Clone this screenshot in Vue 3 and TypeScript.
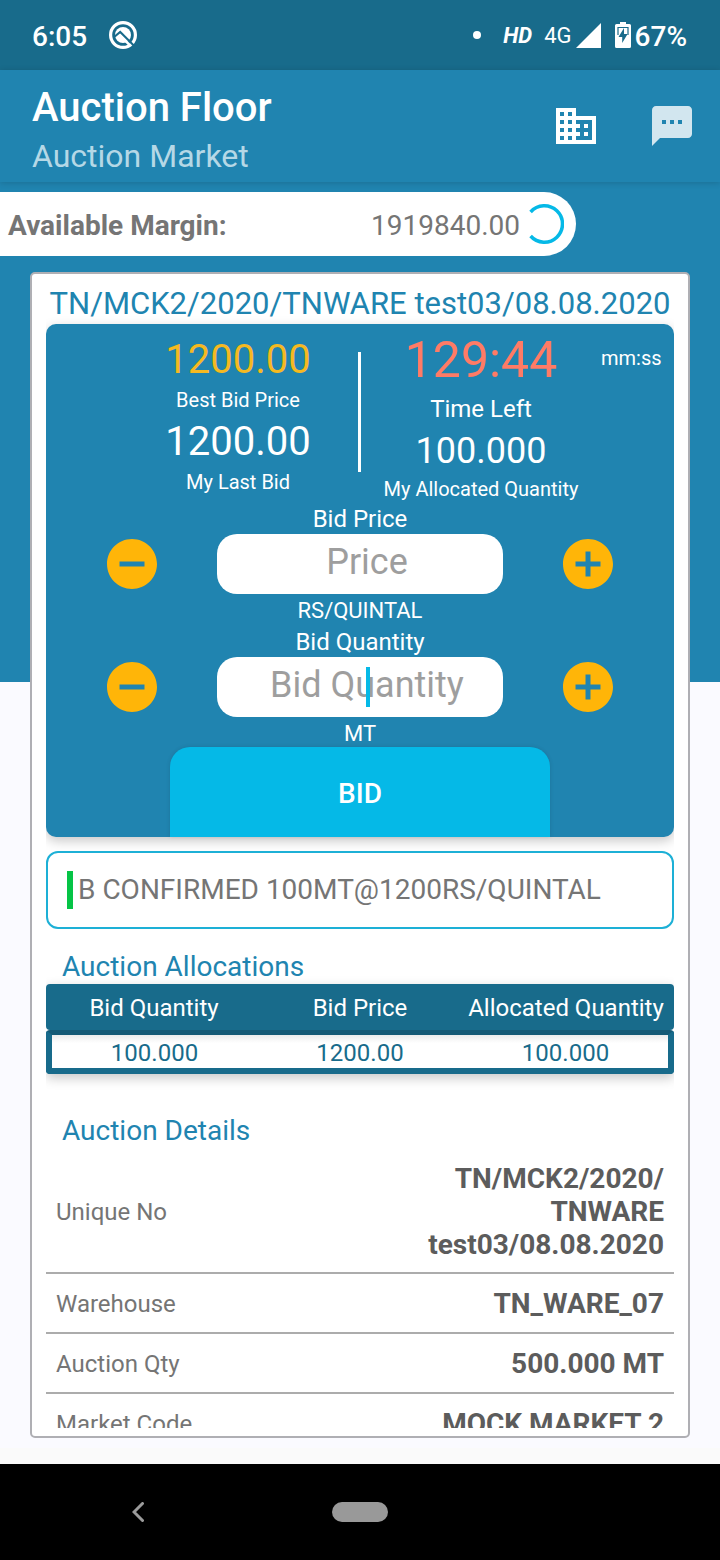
<script setup lang="ts">
import { ref } from 'vue'

interface Stepper {
  id: string
  label: string
  hint: string
  unit: string
  focused: boolean
}

interface Detail {
  name: string
  value: string
}

const lot = 'TN/MCK2/2020/TNWARE test03/08.08.2020'

const steppers: Stepper[] = [
  { id: 'bid-price', label: 'Bid Price', hint: 'Price', unit: 'RS/QUINTAL', focused: false },
  { id: 'bid-quantity', label: 'Bid Quantity', hint: 'Bid Quantity', unit: 'MT', focused: true },
]

const amounts = ref<string[]>(['', ''])

function step(index: number, by: number): void {
  const next = Math.max(0, (Number(amounts.value[index]) || 0) + by)
  amounts.value[index] = String(next)
}

const allocations: string[][] = [['100.000', '1200.00', '100.000']]

const details: Detail[] = [
  { name: 'Unique No', value: 'TN/MCK2/2020/\nTNWARE\ntest03/08.08.2020' },
  { name: 'Warehouse', value: 'TN_WARE_07' },
  { name: 'Auction Qty', value: '500.000 MT' },
  { name: 'Market Code', value: 'MOCK MARKET 2' },
]
</script>

<template>
  <div class="screen">
    <div class="status">
      <span class="clock">6:05</span>
      <svg class="q-logo" viewBox="0 0 28 28" aria-hidden="true">
        <circle cx="14" cy="14" r="12.400" fill="none" stroke="#fff" stroke-width="3.200" />
        <circle cx="14" cy="14" r="8" fill="#fff" />
        <path d="M4.500 16.500L11.200 11L25 24.800" fill="none" stroke="#186b8b" stroke-width="2.200" />
        <path d="M10.800 14.200L21.500 24.900" fill="none" stroke="#fff" stroke-width="2.600" />
      </svg>
      <span class="dot"></span>
      <span class="hd">HD</span>
      <span class="network">4G</span>
      <svg class="signal" viewBox="0 0 25 25" aria-hidden="true"><path d="M25 0V25H0Z" fill="#fff" /></svg>
      <svg class="battery" viewBox="0 0 16 26" aria-hidden="true">
        <path fill="#fff" d="M5 0h6v2h3.500a1.500 1.500 0 0 1 1.500 1.500v21a1.500 1.500 0 0 1-1.500 1.500h-13A1.500 1.500 0 0 1 0 24.500v-21A1.500 1.500 0 0 1 1.500 2H5z" />
        <path d="M3 13V5.500H13V13" fill="none" stroke="#186b8b" stroke-width="1.200" />
        <path d="M9 6L3.500 15H7.200V21L12.600 12H9Z" fill="#186b8b" />
      </svg>
      <span class="charge">67%</span>
    </div>

    <header class="app-bar">
      <div class="titles">
        <h1>Auction Floor</h1>
        <p>Auction Market</p>
      </div>
      <button class="icon-button" type="button" aria-label="Market">
        <svg viewBox="0 0 24 24"><path fill="#fff" d="M12 7V3H2v18h20V7H12zM6 19H4v-2h2v2zm0-4H4v-2h2v2zm0-4H4V9h2v2zm0-4H4V5h2v2zm4 12H8v-2h2v2zm0-4H8v-2h2v2zm0-4H8V9h2v2zm0-4H8V5h2v2zm10 12h-8v-2h2v-2h-2v-2h2v-2h-2V9h8v10zm-2-8h-2v2h2v-2zm0 4h-2v2h2v-2z" /></svg>
      </button>
      <button class="icon-button" type="button" aria-label="Messages">
        <svg viewBox="0 0 24 24"><path fill="#d2e6ef" d="M20 2H4c-1.100 0-1.990.9-1.990 2L2 22l4-4h14c1.100 0 2-.9 2-2V4c0-1.100-.9-2-2-2zM9 11H7V9h2v2zm4 0h-2V9h2v2zm4 0h-2V9h2v2z" /></svg>
      </button>
    </header>

    <main class="content">
      <div class="margin-bar">
        <strong>Available Margin:</strong>
        <span class="margin-value">1919840.00</span>
        <svg class="spinner" viewBox="0 0 40 40" aria-hidden="true">
          <path d="M6.600 8A18.200 18.200 0 1 1 6.600 32" fill="none" stroke="#05b9e7" stroke-width="3.500" />
        </svg>
      </div>

      <article class="card">
        <div class="scroller">
          <h2 class="lot">{{ lot }}</h2>

          <section class="panel">
            <div class="stats">
              <div class="stat-column prices">
                <span class="price best">1200.00</span>
                <span class="caption">Best Bid Price</span>
                <span class="price">1200.00</span>
                <span class="caption">My Last Bid</span>
              </div>
              <span class="divider"></span>
              <div class="stat-column timing">
                <span class="timer">129:44</span>
                <span class="timer-label">Time Left</span>
                <span class="allocated">100.000</span>
                <span class="allocated-label">My Allocated Quantity</span>
              </div>
              <span class="format">mm:ss</span>
            </div>

            <div class="steppers">
              <div v-for="(item, index) in steppers" :key="item.id" class="stepper">
                <label :for="item.id">{{ item.label }}</label>
                <div class="stepper-row">
                  <button class="round" type="button" :aria-label="'Decrease ' + item.label" @click="step(index, -1)">
                    <svg viewBox="0 0 24 24"><path fill="#ffb508" d="M12 2C6.480 2 2 6.480 2 12s4.480 10 10 10 10-4.480 10-10S17.520 2 12 2zm5 11H7v-2h10v2z" /></svg>
                  </button>
                  <div class="field">
                    <input :id="item.id" v-model="amounts[index]" type="text" inputmode="decimal" :placeholder="item.hint" />
                    <span v-if="item.focused" class="caret"></span>
                  </div>
                  <button class="round" type="button" :aria-label="'Increase ' + item.label" @click="step(index, 1)">
                    <svg viewBox="0 0 24 24"><path fill="#ffb508" d="M12 2C6.480 2 2 6.480 2 12s4.480 10 10 10 10-4.480 10-10S17.520 2 12 2zm5 11h-4v4h-2v-4H7v-2h4V7h2v4h4v2z" /></svg>
                  </button>
                </div>
                <span class="unit">{{ item.unit }}</span>
              </div>
            </div>

            <button class="bid" type="button">BID</button>
          </section>

          <p class="message">B CONFIRMED 100MT@1200RS/QUINTAL</p>

          <h3>Auction Allocations</h3>
          <div class="allocations">
            <table>
              <thead>
                <tr>
                  <th scope="col">Bid Quantity</th>
                  <th scope="col">Bid Price</th>
                  <th scope="col">Allocated Quantity</th>
                </tr>
              </thead>
              <tbody>
                <tr v-for="(row, r) in allocations" :key="r">
                  <td v-for="(cell, c) in row" :key="c">{{ cell }}</td>
                </tr>
              </tbody>
            </table>
          </div>

          <h3 class="details-title">Auction Details</h3>
          <dl>
            <div v-for="detail in details" :key="detail.name" class="detail">
              <dt>{{ detail.name }}</dt>
              <dd>{{ detail.value }}</dd>
            </div>
          </dl>
        </div>
      </article>
    </main>

    <nav class="nav-bar">
      <button class="back" type="button" aria-label="Back">
        <svg viewBox="0 0 12 20"><path d="M10.500 1.500L2 10L10.500 18.500" fill="none" stroke="#9b9b9b" stroke-width="3" stroke-linecap="round" /></svg>
      </button>
      <button class="home" type="button" aria-label="Home"></button>
    </nav>
  </div>
</template>

<style>
body {
  background: #fafaff;
}
</style>

<style scoped>
.screen {
  display: flex;
  flex-direction: column;
  height: 100vh;
  overflow: hidden;
  font-family: Roboto, "Noto Sans", sans-serif;
  color: #fff;
}

.screen * {
  box-sizing: border-box;
}

h1, h2, h3, p, dl, dd {
  margin: 0;
  font-weight: 400;
}

button {
  border: 0;
  padding: 0;
  background: none;
  color: inherit;
  font: inherit;
}

svg {
  display: block;
}

.status {
  flex: none;
  display: flex;
  align-items: center;
  height: 70px;
  padding: 0 33px 0 32px;
  background: #186b8b;
  font-size: 28px;
  font-weight: 500;
  line-height: 34px;
}

.clock,
.charge {
  padding-top: 4px;
}

.q-logo {
  width: 28px;
  height: 28px;
  margin-left: 22px;
}

.dot {
  width: 8px;
  height: 8px;
  margin-left: auto;
  border-radius: 50%;
  background: #fff;
}

.hd {
  margin-left: 22px;
  padding-top: 2px;
  font-size: 22px;
  font-weight: 700;
  font-style: italic;
}

.network {
  margin-left: 12px;
  padding-top: 2px;
  font-size: 22px;
  font-weight: 400;
}

.signal {
  width: 25px;
  height: 25px;
  margin-left: 4px;
}

.battery {
  width: 16px;
  height: 26px;
  margin-left: 14px;
}

.charge {
  margin-left: 4px;
}

.app-bar {
  flex: none;
  position: relative;
  display: flex;
  align-items: center;
  gap: 48px;
  height: 112px;
  padding: 0 24px 0 32px;
  background: #2084b0;
  box-shadow: 0 1px 6px rgba(0, 0, 0, 0.16);
}

.titles {
  flex: 1;
  padding-top: 9px;
}

h1 {
  font-size: 40px;
  font-weight: 500;
  line-height: 50px;
}

.titles p {
  font-size: 32px;
  line-height: 46px;
  color: #b5d8e6;
}

.icon-button {
  width: 48px;
  height: 48px;
}

.content {
  flex: 1;
  min-height: 0;
  display: flex;
  flex-direction: column;
  gap: 16px;
  padding: 10px 0 26px;
  background:
    linear-gradient(#fafafa, #fafafa) bottom / 100% 16px no-repeat,
    linear-gradient(#2084b0, #2084b0) top / 100% 500px no-repeat,
    #fafaff;
}

.margin-bar {
  flex: none;
  display: flex;
  align-items: center;
  width: 80%;
  height: 64px;
  padding: 0 12px 0 8px;
  border-radius: 0 32px 32px 0;
  background: #fff;
  color: #757575;
  font-size: 28px;
  line-height: 34px;
}

.margin-bar strong,
.margin-value {
  padding-top: 4px;
}

.margin-bar strong {
  flex: 1;
}

.spinner {
  width: 40px;
  height: 40px;
  margin-left: 4px;
}

.card {
  flex: 1;
  min-height: 0;
  display: flex;
  margin: 0 30px;
  padding: 10px 14px 8px;
  border: 2px solid #afafb4;
  border-radius: 5px;
  background: #fff;
}

.scroller {
  flex: 1;
  min-width: 0;
  overflow: hidden;
}

.lot {
  font-size: 31px;
  line-height: 40px;
  text-align: center;
  white-space: nowrap;
  color: #2084b0;
}

.panel {
  padding-top: 6px;
  border-radius: 10px;
  background: #2084b0;
  box-shadow: 0 4px 12px rgba(0, 0, 0, 0.22);
  text-align: center;
}

.stats {
  display: grid;
  grid-template-columns: 72px 1fr 3px 1fr 73px;
}

.stat-column {
  display: flex;
  flex-direction: column;
  white-space: nowrap;
}

.prices {
  grid-column: 2;
  padding-top: 6px;
}

.price {
  font-size: 40px;
  line-height: 48px;
}

.best {
  color: #f5b921;
}

.caption {
  font-size: 20px;
  line-height: 34px;
}

.prices .caption {
  line-height: 32px;
  padding-bottom: 2px;
}

.divider {
  height: 120px;
  margin-top: 22px;
  background: #fff;
}

.timer {
  font-size: 50px;
  line-height: 60px;
  color: #ff7b66;
}

.timer-label {
  font-size: 24px;
  line-height: 38px;
}

.allocated {
  font-size: 36px;
  line-height: 46px;
}

.allocated-label {
  font-size: 20px;
  line-height: 30px;
}

.format {
  margin-top: 16px;
  font-size: 20px;
  line-height: 24px;
  text-align: left;
}

.steppers {
  display: flex;
  flex-direction: column;
  gap: 3px;
}

.stepper {
  display: flex;
  flex-direction: column;
}

.stepper label {
  font-size: 24px;
  line-height: 30px;
}

.stepper-row {
  display: grid;
  grid-template-columns: 3fr 5fr 3fr;
  align-items: center;
  justify-items: center;
}

.round {
  width: 60px;
  height: 60px;
}

.field {
  position: relative;
  width: 100%;
}

.field input {
  display: block;
  width: 100%;
  height: 60px;
  padding: 0 8px 4px 22px;
  border: 0;
  border-radius: 20px;
  outline: none;
  background: #fff;
  color: #424242;
  font: inherit;
  font-size: 36px;
  text-align: center;
}

.field input::placeholder {
  color: #9e9e9e;
  opacity: 1;
}

.caret {
  position: absolute;
  top: 10px;
  left: 149px;
  width: 4px;
  height: 40px;
  background: #05b9e7;
}

.unit {
  padding-top: 4px;
  font-size: 22px;
  line-height: 26px;
}

.bid {
  display: block;
  width: 380px;
  max-width: 100%;
  height: 90px;
  margin: 0 auto;
  padding-top: 2px;
  border-radius: 20px 20px 0 0;
  background: #05b9e7;
  box-shadow: 0 0 4px rgba(0, 0, 0, 0.12);
  font-size: 28px;
  font-weight: 500;
}

.message {
  display: flex;
  align-items: center;
  gap: 5px;
  height: 78px;
  margin-top: 14px;
  padding-left: 19px;
  border: 2px solid #1db0d6;
  border-radius: 12px;
  background: #fff;
  color: #757575;
  font-size: 28px;
  line-height: 42px;
  white-space: nowrap;
}

.message::before {
  content: "";
  width: 6px;
  height: 38px;
  background: #05c446;
}

h3 {
  margin-top: 21px;
  padding-left: 16px;
  font-size: 28px;
  line-height: 34px;
  color: #2084b0;
}

.allocations {
  border-radius: 4px;
  box-shadow: 0 4px 12px rgba(0, 0, 0, 0.22);
}

table {
  width: 100%;
  border-collapse: separate;
  border-spacing: 0;
  table-layout: fixed;
  font-size: 24px;
  text-align: center;
  white-space: nowrap;
}

th {
  height: 46px;
  padding: 2px 0 0;
  background: #186b8b;
  font-weight: 400;
}

th:first-child {
  width: 211px;
  padding-left: 5px;
  border-radius: 4px 0 0 4px;
}

th:last-child {
  width: 211px;
  padding-right: 5px;
  border-radius: 0 4px 4px 0;
}

td {
  height: 44px;
  padding: 4px 0 0;
  border-top: 5px solid #155a76;
  border-bottom: 6px solid #186b8b;
  background: linear-gradient(#ececec, #fff 8px);
  color: #186b8b;
  line-height: 29px;
}

td:first-child {
  border-left: 6px solid #186b8b;
  border-radius: 4px 0 0 4px;
}

td:last-child {
  border-right: 6px solid #186b8b;
  border-radius: 0 4px 4px 0;
}

.details-title {
  margin-top: 40px;
  padding-bottom: 2px;
}

.detail {
  display: flex;
  align-items: center;
  justify-content: space-between;
  min-height: 60px;
  padding: 12px 10px 11px;
  border-bottom: 2px solid #acacac;
}

dt {
  font-size: 24px;
  color: #757575;
}

dd {
  font-size: 28px;
  font-weight: 700;
  line-height: 33px;
  text-align: right;
  white-space: pre-line;
  color: #5c5c5c;
}

.nav-bar {
  flex: none;
  display: grid;
  grid-template-columns: 5fr 3fr 5fr;
  align-items: center;
  justify-items: center;
  height: 96px;
  background: #000;
}

.back {
  width: 12px;
  height: 20px;
}

.home {
  width: 56px;
  height: 20px;
  border-radius: 10px;
  background: #999;
}
</style>
